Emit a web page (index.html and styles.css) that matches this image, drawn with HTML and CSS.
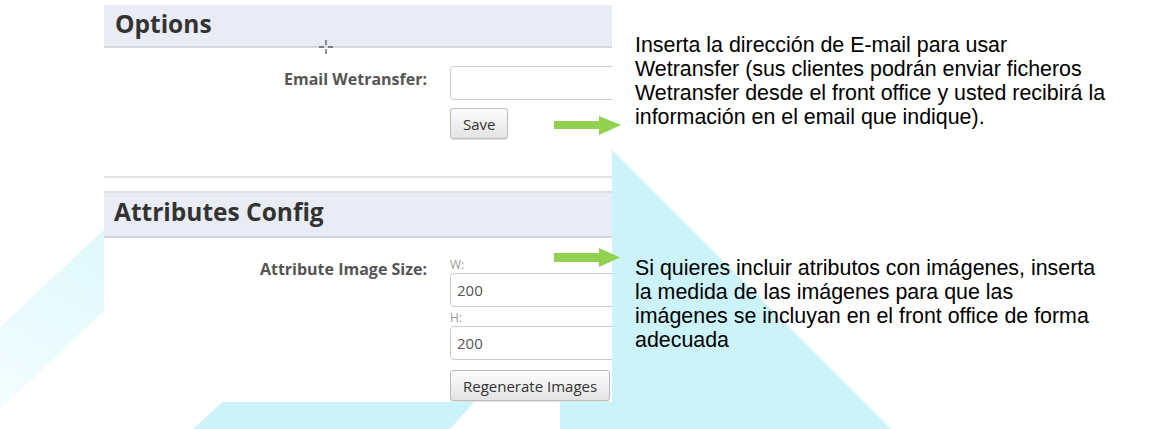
FILE: index.html
```html
<!DOCTYPE html>
<html lang="es">
<head>
    <meta charset="UTF-8">
    <meta name="viewport" content="width=device-width, initial-scale=1.0">
    <title>Wetransfer - Opciones del módulo</title>

    <link rel="stylesheet" href="styles.css">
</head>
<body>

    <div class="slide">
        <!-- decorative shapes behind the slide -->
        <svg class="backdrop" width="1165" height="429" viewBox="0 0 1165 429">
            <defs>
                <linearGradient id="fade" x1="104" y1="240" x2="0" y2="400" gradientUnits="userSpaceOnUse">
                    <stop offset="0" stop-color="#e0f9fc"/>
                    <stop offset="1" stop-color="#f3fdfe"/>
                </linearGradient>
            </defs>
            <polygon points="0,327 140,196 140,276 0,410" fill="url(#fade)"/>
            <polygon points="246,380 494,380 450,429 193,429" fill="#ccf3fa"/>
            <polygon points="560,98 560,429 891,429" fill="#ccf3fa"/>
        </svg>

        <div class="shot">
            <section class="panel">
                <h3 class="panel-heading">Options</h3>
                <div class="form-row">
                    <label class="row-label" for="email-wt">Email Wetransfer:</label>
                    <div class="row-fields">
                        <input type="text" id="email-wt" class="field">
                        <button class="btn">Save</button>
                    </div>
                </div>
                <div class="panel-footer"></div>
            </section>

            <section class="panel panel-attr">
                <h3 class="panel-heading">Attributes Config</h3>
                <div class="form-row">
                    <label class="row-label">Attribute Image Size:</label>
                    <div class="row-fields">
                        <span class="sub-label">W:</span>
                        <input type="text" class="field" value="200">
                        <span class="sub-label sub-label-h">H:</span>
                        <input type="text" class="field" value="200">
                        <button class="btn btn-regen">Regenerate Images</button>
                    </div>
                </div>
            </section>
        </div>

        <div class="notes">
            <p class="note note-email">Inserta la dirección de E-mail para usar Wetransfer (sus clientes podrán enviar ficheros Wetransfer desde el front office y usted recibirá la información en el email que indique).</p>
            <p class="note note-size">Si quieres incluir atributos con imágenes, inserta la medida de las imágenes para que las imágenes se incluyan en el front office de forma adecuada</p>
        </div>

        <!-- green pointers -->
        <svg class="pointer pointer-email" width="70" height="22" viewBox="0 0 70 22">
            <rect x="1" y="5" width="46" height="8" fill="#92d050"/>
            <polygon points="46,0 68,9 46,19" fill="#92d050"/>
        </svg>
        <svg class="pointer pointer-size" width="70" height="22" viewBox="0 0 70 22">
            <rect x="1" y="5" width="46" height="9" fill="#92d050"/>
            <polygon points="46,0 67,9.5 46,19" fill="#92d050"/>
        </svg>

        <svg class="cursor" width="14" height="14" viewBox="0 0 14 14">
            <path d="M7 0v5M7 9v5M0 7h5M9 7h5" stroke="#222" stroke-width="1"/>
        </svg>
    </div>

</body>
</html>
```

FILE: styles.css
```css
* {
    margin: 0;
    padding: 0;
    box-sizing: border-box;
}

body {
    background: #fff;
    font-family: "Open Sans", sans-serif;
}

.slide {
    position: relative;
    width: 1165px;
    height: 429px;
    overflow: hidden;
    display: flex;
}

.backdrop {
    position: absolute;
    left: 0;
    top: 0;
}

/* Back-office panel */
.shot {
    position: relative;
    flex-shrink: 0;
    margin-left: 104px;
    width: 508px;
    height: 402px;
    padding-top: 5px;
    background: #fff;
    overflow: hidden;
}

.panel-heading {
    height: 43px;
    padding: 0 11px;
    line-height: 37px;
    background: #e9ecf4;
    border-bottom: 2px solid #d5d8df;
    font-size: 24.5px;
    font-weight: 700;
    color: #333;
}

.panel-attr {
    margin-top: 13px;
}

.panel-attr .panel-heading {
    height: 47px;
    border-top: 2px solid #dcdfe5;
    padding-left: 10px;
}

.panel-footer {
    margin-top: 37px;
    border-top: 2px solid #e0e2e6;
}

.form-row {
    display: flex;
    padding-top: 18px;
}

.row-label {
    flex-shrink: 0;
    width: 323px;
    padding-top: 2px;
    text-align: right;
    font-size: 16px;
    font-weight: 700;
    line-height: 22px;
    color: #555;
}

.row-fields {
    display: flex;
    flex-direction: column;
    align-items: flex-start;
    flex-shrink: 0;
    margin-left: 23px;
}

.field {
    width: 220px;
    height: 34px;
    padding: 0 6px;
    border: 1px solid #ccc;
    border-radius: 4px;
    font-family: "Open Sans", sans-serif;
    font-size: 15px;
    color: #555;
}

.sub-label {
    font-size: 12px;
    line-height: 17px;
    color: #999;
}

.sub-label-h {
    margin-top: 3px;
    line-height: 16px;
}

.btn {
    margin-top: 8px;
    height: 31px;
    padding: 0 12px;
    background: linear-gradient(#fdfdfd, #e3e3e3);
    border: 1px solid #bcbcbc;
    border-radius: 3px;
    box-shadow: 0 1px 1px rgba(0, 0, 0, 0.12);
    font-family: "Open Sans", sans-serif;
    font-size: 15px;
    color: #333;
}

.btn-regen {
    margin-top: 10px;
}

/* Explanations on the right */
.notes {
    position: relative;
    width: 473px;
    margin-left: 23px;
    font-family: "Liberation Sans", Arial, sans-serif;
    font-size: 21.4px;
    line-height: 24px;
    color: #000;
}

.note-email {
    margin-top: 33px;
}

.note-size {
    margin-top: 127px;
}

.pointer {
    position: absolute;
    left: 553px;
}

.pointer-email {
    top: 116px;
}

.pointer-size {
    top: 248px;
}

.cursor {
    position: absolute;
    left: 319px;
    top: 40px;
}
```
